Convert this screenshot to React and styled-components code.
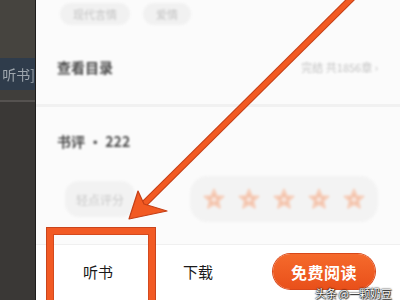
import React from "react";
import styled, { createGlobalStyle } from "styled-components";

const Global = createGlobalStyle`
  html, body {
    margin: 0;
    padding: 0;
    width: 400px;
    height: 300px;
    overflow: hidden;
    font-family: "Noto Sans CJK SC", "Noto Sans", sans-serif;
  }
`;

const Screen = styled.div`
  position: relative;
  width: 400px;
  height: 300px;
  display: flex;
  overflow: hidden;
  background: #fbfbfb;
`;

// ---------- left dark strip ----------
const Strip = styled.aside`
  width: 35px;
  flex-shrink: 0;
  display: flex;
  flex-direction: column;
  background: #3a3836;
  border-right: 1px solid #1e1d1c;
`;
const StripTop = styled.div`
  height: 58px;
  background: #46443f;
`;
const StripBand = styled.div`
  height: 32px;
  display: flex;
  align-items: center;
  justify-content: flex-end;
  background: #2f3c4b;
  color: #9ea6ad;
  font-size: 14px;
  white-space: nowrap;
  filter: blur(0.4px);
`;
const StripLine = styled.div`
  height: 10px;
  border-bottom: 2px solid #555250;
  background: #403e3b;
`;

// ---------- panel ----------
const Panel = styled.main`
  flex: 1;
  display: flex;
  flex-direction: column;
  background: #fbfbfb;
`;
const ChipRow = styled.div`
  height: 29px;
  padding: 3px 0 0 24px;
  box-sizing: border-box;
  display: flex;
  gap: 13px;
  align-items: flex-start;
`;
const Chip = styled.span`
  height: 22px;
  padding: 0 13px;
  border-radius: 11px;
  background: #f1f1f1;
  color: #c4c4c4;
  font-size: 11px;
  line-height: 22px;
  filter: blur(1px);
`;
const Row = styled.div`
  height: ${(p) => p.$h}px;
  padding: 0 22px 0 21px;
  display: flex;
  align-items: center;
  justify-content: space-between;
`;
const Title = styled.span`
  font-size: 14px;
  font-weight: 700;
  color: #4a4a4a;
  filter: blur(1.2px);
`;
const Hint = styled.span`
  font-size: 11px;
  color: #c2c2c2;
  filter: blur(1.1px);
`;
const Divider = styled.div`
  height: ${(p) => p.$w}px;
  background: ${(p) => p.$c};
`;
const RateRow = styled.div`
  height: 48px;
  padding: 0 0 0 29px;
  display: flex;
  align-items: center;
  gap: 55px;
`;
const RatePill = styled.span`
  width: 70px;
  height: 36px;
  border-radius: 14px;
  background: #f2f2f2;
  color: #c9c9c9;
  font-size: 12px;
  display: flex;
  align-items: center;
  justify-content: center;
  filter: blur(1.2px);
`;
const Stars = styled.div`
  height: 46px;
  padding: 0 12px;
  border-radius: 18px;
  background: #f3f3f3;
  display: flex;
  align-items: center;
  gap: 11px;
  filter: blur(0.9px);
`;
const BottomBar = styled.nav`
  flex: 1;
  display: flex;
  align-items: center;
  padding: 0 0 2px 12px;
  background: #ffffff;
`;
const BarItem = styled.span`
  width: 100px;
  text-align: center;
  font-size: 15px;
  color: #1a1a1a;
`;
const ReadButton = styled.button`
  margin-left: 25px;
  width: 102px;
  height: 35px;
  border: none;
  border-radius: 18px;
  background: linear-gradient(180deg, #f56a2c, #e9501a);
  box-shadow: 0 0 0 1px #d8481a;
  color: #fff;
  font-family: inherit;
  font-size: 16px;
  font-weight: 700;
  letter-spacing: 0.5px;
`;

// ---------- annotations over the screenshot ----------
const Frame = styled.div`
  position: absolute;
  left: 47px;
  top: 228px;
  width: 96px;
  height: 80px;
  border: 6px solid #f25a24;
  box-shadow: 0 0 0 1px #c9451c, inset 0 0 0 1px #d44a1e;
  pointer-events: none;
`;
const Arrow = styled.svg`
  position: absolute;
  left: 0;
  top: 0;
  pointer-events: none;
`;
const Watermark = styled.span`
  position: absolute;
  left: 315px;
  top: 285px;
  color: #fff;
  font-size: 11px;
  letter-spacing: -0.3px;
  white-space: nowrap;
  text-shadow: 0 0 2px #000, 0 0 1px #000, 1px 1px 1px #333;
`;

const Star = () => (
  <svg width="24" height="24" viewBox="0 0 24 24">
    <path
      d="M12 2.5l2.9 6.2 6.7.8-5 4.6 1.4 6.7L12 17.4l-6 3.4 1.4-6.7-5-4.6 6.7-.8z"
      fill="#f3c2aa"
      stroke="#f6d3c2"
      strokeWidth="2"
      strokeLinejoin="round"
    />
    <circle cx="12" cy="12.5" r="2.6" fill="#f8e1d6" />
  </svg>
);

const App = () => {
  return (
    <>
      <Global />
      <Screen>
        <Strip>
          <StripTop />
          <StripBand>听书]</StripBand>
          <StripLine />
        </Strip>
        <Panel>
          <ChipRow>
            <Chip>现代言情</Chip>
            <Chip>爱情</Chip>
          </ChipRow>
          <Row $h={75}>
            <Title>查看目录</Title>
            <Hint>完结 共1856章 ›</Hint>
          </Row>
          <Divider $w={3} $c="#f1f1f1" />
          <Row $h={68}>
            <Title>书评 · 222</Title>
          </Row>
          <RateRow>
            <RatePill>轻点评分</RatePill>
            <Stars>
              {[0, 1, 2, 3, 4].map((i) => (
                <Star key={i} />
              ))}
            </Stars>
          </RateRow>
          <Divider $w={1} $c="#f0f0f0" style={{ marginTop: 21 }} />
          <BottomBar>
            <BarItem>听书</BarItem>
            <BarItem>下载</BarItem>
            <ReadButton>免费阅读</ReadButton>
          </BottomBar>
        </Panel>

        <Frame />
        <Arrow width="400" height="300" viewBox="0 0 400 300">
          <line x1="354" y1="-4" x2="140" y2="208" stroke="#c43f16" strokeWidth="7" />
          <line x1="354" y1="-4" x2="140" y2="208" stroke="#f25a22" strokeWidth="5" />
          <polygon
            points="129,219 138,191 144,204 167,211"
            fill="#f25a22"
            stroke="#c43f16"
            strokeWidth="1.2"
            strokeLinejoin="round"
          />
        </Arrow>
        <Watermark>头条 @一颗奶豆</Watermark>
      </Screen>
    </>
  );
};

export default App;
